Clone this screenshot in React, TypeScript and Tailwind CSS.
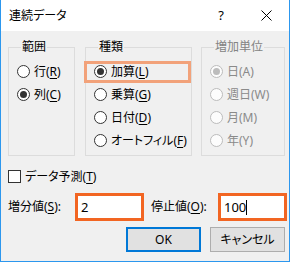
import React from 'react';

const FONT = "font-['Noto_Sans','Noto_Sans_CJK_JP',sans-serif] [font-feature-settings:'palt']";

type RadioProps = { checked?: boolean; disabled?: boolean };

const Radio: React.FC<RadioProps> = ({ checked, disabled }) => (
  <span
    className={`w-[13px] h-[13px] shrink-0 rounded-full border flex items-center justify-center ${
      disabled ? 'border-[#bcbcbc] bg-[#fcfcfc]' : 'border-[#333333] bg-white'
    }`}
  >
    {checked && (
      <span className={`w-[7px] h-[7px] rounded-full ${disabled ? 'bg-[#bcbcbc]' : 'bg-[#333333]'}`} />
    )}
  </span>
);

const Row: React.FC<{ children: React.ReactNode; disabled?: boolean }> = ({ children, disabled }) => (
  <div
    className={`relative flex items-center gap-[4px] h-[23px] text-[12px] leading-none whitespace-nowrap ${
      disabled ? 'text-[#8a8a8a]' : 'text-black'
    }`}
  >
    {children}
  </div>
);

const Key: React.FC<{ k: string }> = ({ k }) => (
  <span className="underline underline-offset-2 decoration-1">{k}</span>
);

export default function App() {
  return (
    <div className={`w-[291px] h-[262px] bg-white ${FONT}`}>
      <div className="w-[290px] h-[262px] border-x border-b border-[#2c97ee] flex flex-col">
        {/* Title bar */}
        <div className="h-[31px] bg-white flex items-center pl-[8px] text-[12px] text-black">
          <span>連続データ</span>
          <span className="ml-auto mr-[37px] text-[13px]">?</span>
          <svg width="11" height="11" viewBox="0 0 11 11" className="mr-[17px]">
            <path d="M0.5 0.5 L10.5 10.5 M10.5 0.5 L0.5 10.5" stroke="#000" strokeWidth="1" />
          </svg>
        </div>

        {/* Body */}
        <div className="flex-1 bg-[#f0f0f0] pl-[7px]">
          <div className="flex mt-[9px]">
            <fieldset className="min-w-0 w-[67px] h-[116px] border border-[#dcdcdc] px-[8px] pt-[6px]">
              <legend className="ml-[4px] px-[1px] text-[12px] leading-[14px] text-black">範囲</legend>
              <Row>
                <Radio />
                <span>行(<Key k="R" />)</span>
              </Row>
              <Row>
                <Radio checked />
                <span>列(<Key k="C" />)</span>
              </Row>
            </fieldset>

            <fieldset className="min-w-0 ml-[10px] w-[107px] h-[116px] border border-[#dcdcdc] px-[8px] pt-[6px]">
              <legend className="ml-[4px] px-[1px] text-[12px] leading-[14px] text-black">種類</legend>
              <Row>
                <span className="absolute -left-[10px] -right-[8px] top-[1px] bottom-0 border-[3px] border-[#f2a27a]" />
                <Radio checked />
                <span>加算(<Key k="L" />)</span>
              </Row>
              <Row>
                <Radio />
                <span>乗算(<Key k="G" />)</span>
              </Row>
              <Row>
                <Radio />
                <span>日付(<Key k="D" />)</span>
              </Row>
              <Row>
                <Radio />
                <span>オートフィル(<Key k="F" />)</span>
              </Row>
            </fieldset>

            <fieldset className="min-w-0 ml-[9px] w-[84px] h-[116px] border border-[#dcdcdc] px-[8px] pt-[6px]">
              <legend className="ml-[4px] px-[1px] text-[12px] leading-[14px] text-[#838383]">増加単位</legend>
              <Row disabled>
                <Radio checked disabled />
                <span>日(A)</span>
              </Row>
              <Row disabled>
                <Radio disabled />
                <span>週日(W)</span>
              </Row>
              <Row disabled>
                <Radio disabled />
                <span>月(M)</span>
              </Row>
              <Row disabled>
                <Radio disabled />
                <span>年(Y)</span>
              </Row>
            </fieldset>
          </div>

          {/* Checkbox */}
          <div className="mt-[14px] flex items-center gap-[4px] h-[13px] text-[12px] leading-none text-black">
            <span className="w-[13px] h-[13px] border border-[#333333] bg-white" />
            <span>データ予測(<Key k="T" />)</span>
          </div>

          {/* Inputs */}
          <div className="mt-[10px] flex items-center text-[12px] leading-none text-black">
            <span className="w-[67px]">増分値(<Key k="S" />):</span>
            <div className="w-[69px] h-[28px] border-[3px] border-[#f26522] bg-white flex items-center pl-[3px] text-[13px]">
              2
            </div>
            <span className="ml-[7px] w-[67px]">停止値(<Key k="O" />):</span>
            <div className="w-[69px] h-[28px] border-[3px] border-[#f26522] bg-white flex items-center pl-[3px] text-[13px]">
              100
              <span className="w-px h-[15px] bg-black" />
            </div>
          </div>

          {/* Buttons */}
          <div className="mt-[6px] flex pl-[118px] gap-[9px] text-[12px] text-black">
            <button className="w-[75px] h-[25px] border-2 border-[#0078d7] bg-[#e1e1e1] flex items-center justify-center">
              OK
            </button>
            <button className="w-[75px] h-[25px] border border-[#adadad] bg-[#e1e1e1] flex items-center justify-center">
              キャンセル
            </button>
          </div>
        </div>
      </div>
    </div>
  );
}
